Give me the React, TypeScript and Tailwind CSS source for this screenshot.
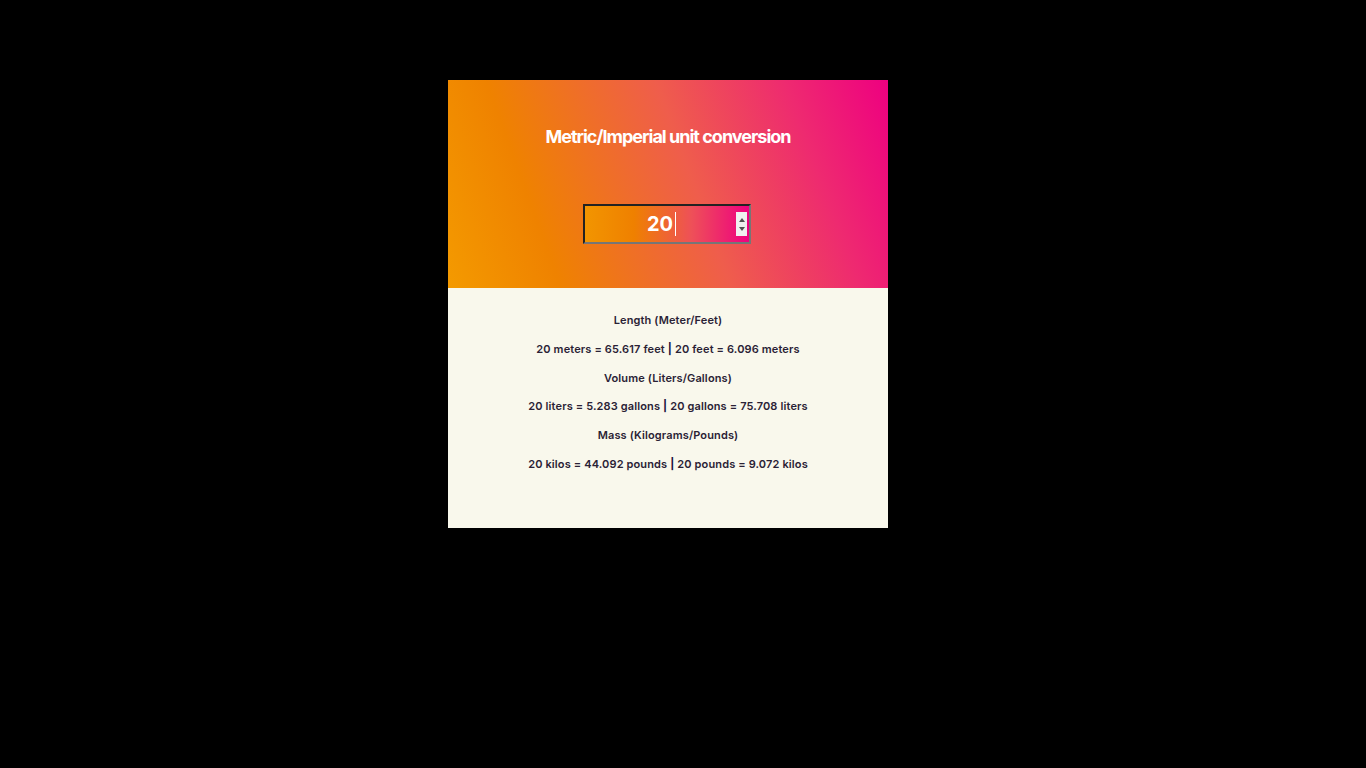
import { useState } from "react";

export default function App() {
  const [value, setValue] = useState("20");
  const n = parseFloat(value) || 0;

  const rows = [
    {
      title: "Length (Meter/Feet)",
      text: `${n} meters = ${(n * 3.28084).toFixed(3)} feet`,
      back: `${n} feet = ${(n / 3.28084).toFixed(3)} meters`,
    },
    {
      title: "Volume (Liters/Gallons)",
      text: `${n} liters = ${(n * 0.264172).toFixed(3)} gallons`,
      back: `${n} gallons = ${(n / 0.264172).toFixed(3)} liters`,
    },
    {
      title: "Mass (Kilograms/Pounds)",
      text: `${n} kilos = ${(n * 2.20462).toFixed(3)} pounds`,
      back: `${n} pounds = ${(n / 2.20462).toFixed(3)} kilos`,
    },
  ];

  return (
    <main className="min-h-screen bg-black pt-[80px] font-['Inter',sans-serif]">
      <div className="ml-[448px] w-[440px]">
        {/* header */}
        <div className="h-[208px] flex flex-col items-center bg-[linear-gradient(70deg,#f49a00_0%,#ef8200_22%,#ef5d4c_55%,#ee2a70_80%,#ee0080_100%)]">
          <h1 className="mt-[43px] text-[18px] font-bold tracking-[-0.055em] text-white">
            Metric/Imperial unit conversion
          </h1>

          <div className="relative mt-[54px] -ml-[2px]">
            <input
              type="number"
              value={value}
              onChange={(e) => setValue(e.target.value)}
              className="w-[168px] h-[40px] pr-[14px] border-2 border-t-[#222] border-l-[#222] border-b-[#767676] border-r-[#767676] bg-[linear-gradient(to_right,#f29500_0%,#ef8000_30%,#ee5058_65%,#ee0080_100%)] text-center text-[20px] font-bold text-white caret-white outline-none appearance-none [&::-webkit-inner-spin-button]:appearance-none [&::-webkit-outer-spin-button]:appearance-none"
            />
            {/* caret */}
            <div className="absolute left-[92px] top-[8px] w-[1px] h-[24px] bg-white" />
            {/* spinner */}
            <div className="absolute right-[4px] top-[8px] w-[11px] h-[24px] bg-[#f0f0f0] flex flex-col items-center justify-center gap-[5px]">
              <div className="w-0 h-0 border-l-[3.5px] border-r-[3.5px] border-b-[4px] border-l-transparent border-r-transparent border-b-[#505050]" />
              <div className="w-0 h-0 border-l-[3.5px] border-r-[3.5px] border-t-[4px] border-l-transparent border-r-transparent border-t-[#505050]" />
            </div>
          </div>
        </div>

        {/* results */}
        <div className="h-[240px] bg-[#f9f8ec] pt-[25px] flex flex-col items-center text-[11px] font-semibold tracking-[0.012em] text-[#2a2235]">
          {rows.map((r) => (
            <div key={r.title} className="flex flex-col items-center">
              <p className="h-[28.8px] leading-[14px]">{r.title}</p>
              <p className="h-[28.8px] leading-[14px]">
                {r.text} <span className="font-bold text-[#1a1240]">|</span> {r.back}
              </p>
            </div>
          ))}
        </div>
      </div>
    </main>
  );
}
